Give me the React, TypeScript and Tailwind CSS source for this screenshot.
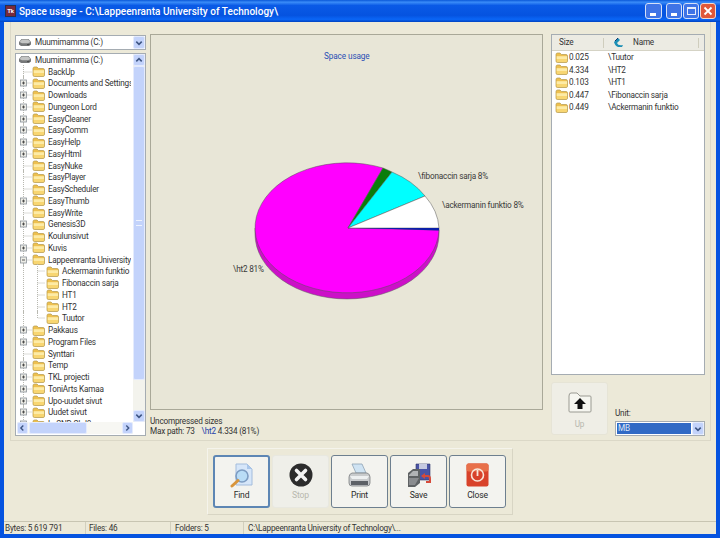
import React from 'react';

const FONT = 'font-["Roboto","Liberation_Sans",Arial,sans-serif]';

const treeRows = [
  { name: 'BackUp', plus: false },
  { name: 'Documents and Settings', plus: true },
  { name: 'Downloads', plus: true },
  { name: 'Dungeon Lord', plus: true },
  { name: 'EasyCleaner', plus: true },
  { name: 'EasyComm', plus: true },
  { name: 'EasyHelp', plus: true },
  { name: 'EasyHtml', plus: true },
  { name: 'EasyNuke', plus: false },
  { name: 'EasyPlayer', plus: false },
  { name: 'EasyScheduler', plus: false },
  { name: 'EasyThumb', plus: true },
  { name: 'EasyWrite', plus: false },
  { name: 'Genesis3D', plus: true },
  { name: 'Koulunsivut', plus: false },
  { name: 'Kuvis', plus: true },
  { name: 'Lappeenranta University of Technology', plus: true, open: true },
  { name: 'Ackermanin funktio', child: true },
  { name: 'Fibonaccin sarja', child: true },
  { name: 'HT1', child: true },
  { name: 'HT2', child: true },
  { name: 'Tuutor', child: true, last: true },
  { name: 'Pakkaus', plus: true },
  { name: 'Program Files', plus: true },
  { name: 'Synttari', plus: false },
  { name: 'Temp', plus: true },
  { name: 'TKL projecti', plus: true },
  { name: 'ToniArts Kamaa', plus: true },
  { name: 'Upo-uudet sivut', plus: true },
  { name: 'Uudet sivut', plus: true },
  { name: 'LcSND SLJ8', plus: true },
];

const listRows = [
  ['0.025', '\\Tuutor'],
  ['4.334', '\\HT2'],
  ['0.103', '\\HT1'],
  ['0.447', '\\Fibonaccin sarja'],
  ['0.449', '\\Ackermanin funktio'],
];

const Folder = () => (
  <svg width="13" height="11" viewBox="0 0 13 11" className="shrink-0">
    <path d="M1 2.5 Q1 1 2.5 1 H5 L6.5 2.5 H11 Q12.5 2.5 12.5 4 V9 Q12.5 10.5 11 10.5 H2.5 Q1 10.5 1 9 Z" fill="#eec04f" stroke="#b39a4e" strokeWidth="0.7" />
    <path d="M1.6 4.2 H12 V7 H1.6 Z" fill="#fdeba6" />
    <path d="M1.6 7 H12 V9 Q12 10 11 10 H2.5 Q1.6 10 1.6 9 Z" fill="#f8d672" />
  </svg>
);

const Drive = () => (
  <svg width="14" height="9" viewBox="0 0 14 9" className="shrink-0">
    <path d="M1 4 L3.5 1 H10.5 L13 4 V6.5 L11 8 H3 L1 6.5 Z" fill="#77797a" />
    <path d="M1.5 4 L4 1.6 H10 L12.5 4 L10 5.3 H4 Z" fill="#c4c5c4" />
    <path d="M9 6.6 H11.5" stroke="#3c3e3d" strokeWidth="0.8" />
  </svg>
);

const Chevron = ({ dir }: { dir: 'up' | 'down' | 'left' | 'right' }) => {
  const d = {
    up: 'M2.5 6.5 L5.5 3.5 L8.5 6.5',
    down: 'M2.5 3.5 L5.5 6.5 L8.5 3.5',
    left: 'M6.5 2 L3.5 5 L6.5 8',
    right: 'M4 2 L7 5 L4 8',
  }[dir];
  return (
    <svg width="11" height="10" viewBox="0 0 11 10">
      <path d={d} fill="none" stroke="#3e5684" strokeWidth="1.7" />
    </svg>
  );
};

const ScrollBtn = ({ dir, className = '' }: { dir: 'up' | 'down' | 'left' | 'right'; className?: string }) => (
  <div className={`flex items-center justify-center bg-[#c3d3fb] rounded-[2px] border border-[#e4ebfd] shrink-0 ${className}`}>
    <Chevron dir={dir} />
  </div>
);

const TreeGutter = ({ plus, open, child, last }: { plus?: boolean; open?: boolean; child?: boolean; last?: boolean }) => (
  <svg width={child ? 27 : 13} height="12" viewBox={child ? '0 0 27 12' : '0 0 13 12'} className="shrink-0 overflow-visible">
    <path d="M4.5 -1 V13" stroke="#b8b8b0" strokeDasharray="1 1" fill="none" />
    {child && <path d={last ? 'M18.5 -1 V6 H26' : 'M18.5 -1 V13 M18.5 6 H26'} stroke="#b8b8b0" strokeDasharray="1 1" fill="none" />}
    {!child && <path d="M4.5 6 H13" stroke="#b8b8b0" strokeDasharray="1 1" fill="none" />}
    {plus && (
      <>
        <rect x="1.5" y="3" width="6" height="6" fill="#ecece6" stroke="#8b9298" strokeWidth="0.8" />
        <path d={open ? 'M3 6 H6' : 'M3 6 H6 M4.5 4.5 V7.5'} stroke="#333" strokeWidth="0.8" />
      </>
    )}
  </svg>
);

const FindIcon = () => (
  <svg width="24" height="25" viewBox="0 0 24 25">
    <path d="M6 1 H17 L22 6 V22 H6 Z" fill="#d6e6f9" stroke="#a3bcdc" />
    <path d="M17 1 V6 H22 Z" fill="#a9c6ea" />
    <circle cx="12" cy="13" r="6" fill="#b9dcf6" stroke="#7d9cc2" strokeWidth="1.6" />
    <path d="M8 17.5 L2 23" stroke="#d8953c" strokeWidth="3" strokeLinecap="round" />
  </svg>
);

const StopIcon = () => (
  <svg width="24" height="24" viewBox="0 0 24 24">
    <circle cx="12" cy="12" r="11.5" fill="#2c2c2c" />
    <path d="M7.5 7.5 L16.5 16.5 M16.5 7.5 L7.5 16.5" stroke="#f4f4f4" strokeWidth="3.6" strokeLinecap="round" />
  </svg>
);

const PrintIcon = () => (
  <svg width="23" height="25" viewBox="0 0 23 25">
    <path d="M4 1 H14 L18 10 H8 Z" fill="#cfe3f3" stroke="#8ea2b4" strokeWidth="0.8" />
    <path d="M1 14 Q1 11 4 10 H19 Q22 11 22 14 V20 Q22 23 19 23 H4 Q1 23 1 20 Z" fill="#c9cbcd" stroke="#7b7d80" strokeWidth="0.8" />
    <path d="M2 13 H21 L19 16 H4 Z" fill="#eef0f1" />
    <path d="M3 18 H20 V22 H3 Z" fill="#5d6166" />
  </svg>
);

const SaveIcon = () => (
  <svg width="24" height="25" viewBox="0 0 24 25">
    <path d="M9 1 H23 V17 H9 Z" fill="#4a54a6" stroke="#2f3568" strokeWidth="0.6" />
    <path d="M12 1 H20 V6 H12 Z" fill="#c5c9e0" />
    <path d="M1 10 L6 6 H13 V20 L8 24 H1 Z" fill="#5f6264" />
    <path d="M2 12 L6 8 H11 V13 H2 Z" fill="#b2b4b6" />
    <path d="M2 15 H12 L8 22 H2 Z" fill="#8a8c8f" />
    <path d="M15 13 H21 Q23 13 23 16 V19 H19" fill="none" stroke="#d64a3a" strokeWidth="2" />
    <path d="M18 10 L14 13 L18 16 Z" fill="#d64a3a" />
  </svg>
);

const CloseIcon = () => (
  <svg width="23" height="24" viewBox="0 0 23 24">
    <rect x="0.5" y="0.5" width="22" height="23" rx="2" fill="#d8422a" />
    <rect x="0.5" y="0.5" width="22" height="8" rx="2" fill="#e8704a" />
    <circle cx="11.5" cy="12" r="6" fill="none" stroke="#f8e6da" strokeWidth="1.6" />
    <path d="M11.5 7 V13" stroke="#f8e6da" strokeWidth="1.8" />
  </svg>
);

const UpIcon = () => (
  <svg width="24" height="21" viewBox="0 0 24 21">
    <path d="M1 4 Q1 1 3 1 H9 L12 4 H22 Q23 4 23 5 V19 Q23 20 22 20 H2 Q1 20 1 19 Z" fill="#f6f6f0" stroke="#9a9a92" />
    <path d="M12 6 L18 12 H14.5 V17 H9.5 V12 H6 Z" fill="#111" />
  </svg>
);

const ToolButton = ({ label, icon, variant }: { label: string; icon: React.ReactNode; variant?: 'focus' | 'disabled' }) => {
  let frame = 'border border-[#6d7f8f] bg-[#f3f3ef] pt-[7px]';
  if (variant === 'focus') frame = 'border-2 border-[#5d86b4] bg-[#f3f3ef] pt-[6px]';
  if (variant === 'disabled') frame = 'border border-[#e8e8e0] bg-[#efefe9] pt-[7px]';
  return (
    <div className={`flex flex-col items-center w-[57px] h-[53px] rounded-[3px] ${frame}`}>
      <div className="h-[26px] flex items-start justify-center">{icon}</div>
      <span className={`text-[8.6px] leading-[12px] ${variant === 'disabled' ? 'text-[#b8b8ae]' : 'text-[#2a2a2a]'}`}>{label}</span>
    </div>
  );
};

const PieChart = () => (
  <svg width="391" height="374" viewBox="151 35 391 374" className="block">
    <text x="324" y="59" fontSize="8.2" letterSpacing="-0.1" fill="#2a4fb5">Space usage</text>
    <path d="M255 228 V234 A92 65 0 0 0 439 234 V228 Z" fill="#cc10c8" stroke="#5a5a5a" strokeWidth="0.5" />
    <path d="M348 228 L383 168 A92 65 0 1 0 439 230 Z" fill="#ff00ff" stroke="#555" strokeWidth="0.5" />
    <path d="M348 228 L392 172 A92 65 0 0 0 383 168 Z" fill="#0a7d0a" stroke="#555" strokeWidth="0.5" />
    <path d="M348 228 L425 196 A92 65 0 0 0 392 172 Z" fill="#00ffff" stroke="#555" strokeWidth="0.5" />
    <path d="M348 228 L439 228 A92 65 0 0 0 425 196 Z" fill="#ffffff" stroke="#555" strokeWidth="0.5" />
    <path d="M355 228 L439 228 V230.5 L392 229 Z" fill="#0b1fa8" />
    <text x="418" y="179" fontSize="8.2" letterSpacing="-0.2" fill="#3a3a3a">\fibonaccin sarja 8%</text>
    <text x="442" y="208" fontSize="8.2" letterSpacing="-0.2" fill="#3a3a3a">\ackermanin funktio 8%</text>
    <text x="233" y="272" fontSize="8.2" letterSpacing="-0.2" fill="#3a3a3a">\ht2 81%</text>
  </svg>
);

export default function App() {
  return (
    <div className={`w-[720px] h-[538px] flex flex-col overflow-hidden bg-[#0553e0] text-[8.2px] tracking-[-0.2px] text-[#333] ${FONT}`}>
      {/* title bar */}
      <div className="h-[22px] shrink-0 flex items-center pl-[5px] pr-[4px] bg-[linear-gradient(180deg,#0a58d8_0%,#3a8cf8_10%,#0a5ae6_25%,#0553e0_70%,#0a66f6_88%,#0042c0_100%)]">
        <div className="w-[11px] h-[12px] bg-[#7a2a3c] border border-[#27304f] flex items-center justify-center text-[6px] leading-none font-bold text-white shrink-0">Tk</div>
        <span className="ml-[3px] text-[10px] font-medium text-white tracking-[0.04px]">Space usage - C:\Lappeenranta University of Technology\</span>
        <div className="ml-auto flex items-center h-[16px]">
          <div className="w-[17px] h-[16px] rounded-[3px] border border-[#d5e0f8] bg-[#3f74e6] flex items-end pl-[4px] pb-[2px]"><div className="w-[6px] h-[3px] bg-white" /></div>
          <div className="ml-[4px] w-[16px] h-[16px] rounded-[3px] border border-[#d5e0f8] bg-[#3f74e6] flex items-end pl-[4px] pb-[2px]"><div className="w-[6px] h-[3px] bg-white" /></div>
          <div className="ml-[1px] w-[16px] h-[16px] rounded-[3px] border border-[#d5e0f8] bg-[#3f74e6] flex items-center justify-center"><div className="w-[9px] h-[8px] border border-[#e6edfb] border-t-2" /></div>
          <div className="ml-[1px] w-[16px] h-[16px] rounded-[3px] border border-[#f0d8d0] bg-[#e0583a] flex items-center justify-center">
            <svg width="10" height="10" viewBox="0 0 10 10"><path d="M1.5 1.5 L8.5 8.5 M8.5 1.5 L1.5 8.5" stroke="#fff" strokeWidth="1.8" /></svg>
          </div>
        </div>
      </div>

      <div className="flex-1 mx-[4px] mb-[4px] bg-[#ece9d8] flex flex-col min-h-0">
        {/* main area */}
        <div className="h-[419px] shrink-0 flex pt-[12px] pl-[4px] ml-[6px] mr-[5px] border-b border-x border-[#dbd8c7]">
          {/* left column */}
          <div className="w-[131px] shrink-0 mt-[1px] flex flex-col">
            <div className="h-[15px] shrink-0 bg-white border border-[#a5acb2] flex items-center pl-[2px]">
              <Drive />
              <span className="ml-[3px] flex-1">Muumimamma (C:)</span>
              <ScrollBtn dir="down" className="w-[12px] h-[13px]" />
            </div>
            <div className="h-[383px] mt-[3px] bg-white border border-[#a5acb2] flex flex-col shrink-0">
              <div className="flex flex-1 min-h-0">
                <div className="flex-1 min-w-0 overflow-hidden whitespace-nowrap">
                  <div className="h-[11.75px] flex items-center pl-[2px]">
                    <Drive />
                    <span className="ml-[3px] leading-none">Muumimamma (C:)</span>
                  </div>
                  {treeRows.map((row) => (
                    <div key={row.name} className="h-[11.75px] flex items-center pl-[3px]">
                      <TreeGutter plus={row.plus} open={row.open} child={row.child} last={row.last} />
                      <Folder />
                      <span className="ml-[3px] leading-none">{row.name}</span>
                    </div>
                  ))}
                </div>
                <div className="w-[2px] shrink-0" />
                <div className="w-[12px] shrink-0 bg-[#f3f3ed] flex flex-col">
                  <ScrollBtn dir="up" className="h-[12px]" />
                  <div className="h-[314px] bg-[#c3d3fb] border border-[#e4ebfd] rounded-[2px] flex items-center justify-center shrink-0">
                    <div className="w-[6px] h-[6px] border-y border-[#eef3fe]" />
                  </div>
                  <div className="flex-1" />
                  <ScrollBtn dir="down" className="h-[12px]" />
                </div>
              </div>
              <div className="h-[12px] shrink-0 mr-[12px] ml-[1px] mb-[1px] bg-[#f7f7f3] flex">
                <ScrollBtn dir="left" className="w-[11px]" />
                <div className="w-[58px] ml-[1px] bg-[#c3d3fb] border border-[#e4ebfd] rounded-[2px]" />
                <div className="flex-1" />
                <ScrollBtn dir="right" className="w-[11px]" />
              </div>
            </div>
          </div>

          {/* chart column */}
          <div className="w-[393px] shrink-0 ml-[4px] flex flex-col">
            <div className="h-[376px] shrink-0 border border-[#a9a898] bg-[#e8e6d7]">
              <PieChart />
            </div>
            <div className="mt-[6px] leading-[10px]">Uncompressed sizes</div>
            <div className="leading-[10px]">
              Max path: 73 <span className="ml-[5px] text-[#1f3fa8]">\ht2</span> 4.334 (81%)
            </div>
          </div>

          {/* right column */}
          <div className="w-[154px] shrink-0 ml-[8px] flex flex-col">
            <div className="h-[341px] shrink-0 bg-white border border-[#a5acb2]">
              <div className="h-[16px] bg-[#ecebe3] border-b border-[#d5d3c5] flex items-center">
                <span className="ml-[7px] w-[44px]">Size</span>
                <div className="w-px h-[10px] bg-[#cfcdbd]" />
                <svg width="11" height="11" viewBox="0 0 11 11" className="ml-[9px]">
                  <path d="M1 5 L5 1 L7 3 L4 6 Q5 9 10 8 L9 10 H5 Q2 9 1 5 Z" fill="#1d8fb5" />
                  <path d="M2 4 L5 1" stroke="#12346e" strokeWidth="1" />
                </svg>
                <span className="ml-[9px]">Name</span>
                <div className="w-px h-[10px] bg-[#cfcdbd] ml-auto mr-[5px]" />
              </div>
              <div>
                {listRows.map(([size, name]) => (
                  <div key={name} className="h-[12.5px] flex items-center pl-[3px]">
                    <Folder />
                    <span className="ml-[1px] w-[39px]">{size}</span>
                    <span>{name}</span>
                  </div>
                ))}
              </div>
            </div>
            <div className="flex mt-[7px]">
              <div className="w-[57px] h-[53px] rounded-[3px] border border-[#e6e4d6] bg-[#efeee6] flex flex-col items-center pt-[9px]">
                <UpIcon />
                <span className="mt-[6px] leading-[10px] text-[#b8b8ae]">Up</span>
              </div>
              <div className="ml-[7px] w-[90px] flex flex-col pt-[26px]">
                <span className="leading-[10px]">Unit:</span>
                <div className="mt-[3px] h-[15px] bg-white border border-[#a5acb2] flex items-center pl-[1px]">
                  <div className="flex-1 h-[11px] bg-[#316ac5] text-[#dfe7f6] leading-[11px] pl-[1px]">MB</div>
                  <ScrollBtn dir="down" className="w-[12px] h-[13px] ml-[1px]" />
                </div>
              </div>
            </div>
          </div>
        </div>

        {/* toolbar */}
        <div className="flex-1 flex justify-center pt-[7px]">
          <div className="w-[306px] h-[67px] border border-[#f5f4ec] border-b-[#d8d5c4] border-r-[#d8d5c4] flex gap-[2px] pl-[5px] pt-[6px]">
            <ToolButton label="Find" icon={<FindIcon />} variant="focus" />
            <ToolButton label="Stop" icon={<StopIcon />} variant="disabled" />
            <ToolButton label="Print" icon={<PrintIcon />} />
            <ToolButton label="Save" icon={<SaveIcon />} />
            <ToolButton label="Close" icon={<CloseIcon />} />
          </div>
        </div>

        {/* status bar */}
        <div className="h-[13px] shrink-0 border-t border-[#c8c5b2] flex items-center">
          <div className="w-[82px] h-full pl-[1px] border-r border-[#d2cfbd] flex items-center">Bytes: 5 619 791</div>
          <div className="w-[85px] h-full pl-[3px] border-r border-[#d2cfbd] flex items-center">Files: 46</div>
          <div className="w-[73px] h-full pl-[4px] border-r border-[#d2cfbd] flex items-center">Folders: 5</div>
          <div className="pl-[4px]">C:\Lappeenranta University of Technology\...</div>
        </div>
      </div>
    </div>
  );
}
